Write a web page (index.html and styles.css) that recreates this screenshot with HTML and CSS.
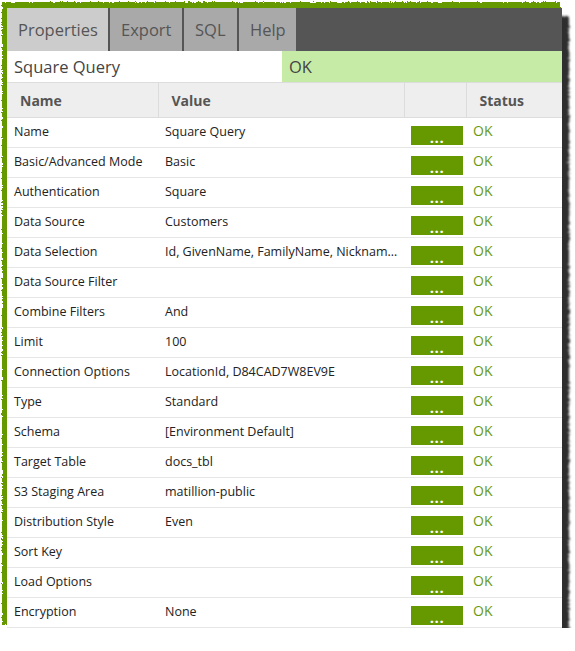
FILE: index.html
```html
<!DOCTYPE html>
<html>
<head>
<meta charset="utf-8">
<link rel="stylesheet" href="styles.css">
</head>
<body>
<svg class="defs" width="0" height="0" aria-hidden="true">
  <filter id="torn" x="-10%" y="-10%" width="120%" height="120%">
    <feTurbulence type="fractalNoise" baseFrequency="0.6" numOctaves="2" seed="3" result="n"/>
    <feDisplacementMap in="SourceGraphic" in2="n" scale="4" xChannelSelector="R" yChannelSelector="G"/>
  </filter>
  <filter id="tornshadow" x="-10%" y="-10%" width="120%" height="120%">
    <feTurbulence type="fractalNoise" baseFrequency="0.5" numOctaves="2" seed="7" result="n"/>
    <feDisplacementMap in="SourceGraphic" in2="n" scale="5" xChannelSelector="R" yChannelSelector="G" result="d"/>
    <feGaussianBlur in="d" stdDeviation="1.2"/>
  </filter>
</svg>
<div class="sheet">
  <div class="shadow"></div>
  <div class="edge"></div>
  <div class="panel">
    <div class="tabs">
      <div class="tab active">Properties</div>
      <div class="tab">Export</div>
      <div class="tab">SQL</div>
      <div class="tab">Help</div>
    </div>
    <div class="titlebar">
      <div class="title">Square Query</div>
      <div class="state">OK</div>
    </div>
    <table class="props">
      <colgroup>
        <col class="c-name"><col class="c-value"><col class="c-btn"><col class="c-status">
      </colgroup>
      <thead>
        <tr><th>Name</th><th>Value</th><th></th><th>Status</th></tr>
      </thead>
      <tbody>
        <tr><td>Name</td><td>Square Query</td><td><span class="btn">...</span></td><td class="ok">OK</td></tr>
        <tr><td>Basic/Advanced Mode</td><td>Basic</td><td><span class="btn">...</span></td><td class="ok">OK</td></tr>
        <tr><td>Authentication</td><td>Square</td><td><span class="btn">...</span></td><td class="ok">OK</td></tr>
        <tr><td>Data Source</td><td>Customers</td><td><span class="btn">...</span></td><td class="ok">OK</td></tr>
        <tr><td>Data Selection</td><td class="trunc">Id, GivenName, FamilyName, Nickname, CompanyName</td><td><span class="btn">...</span></td><td class="ok">OK</td></tr>
        <tr><td>Data Source Filter</td><td></td><td><span class="btn">...</span></td><td class="ok">OK</td></tr>
        <tr><td>Combine Filters</td><td>And</td><td><span class="btn">...</span></td><td class="ok">OK</td></tr>
        <tr><td>Limit</td><td>100</td><td><span class="btn">...</span></td><td class="ok">OK</td></tr>
        <tr><td>Connection Options</td><td>LocationId, D84CAD7W8EV9E</td><td><span class="btn">...</span></td><td class="ok">OK</td></tr>
        <tr><td>Type</td><td>Standard</td><td><span class="btn">...</span></td><td class="ok">OK</td></tr>
        <tr><td>Schema</td><td>[Environment Default]</td><td><span class="btn">...</span></td><td class="ok">OK</td></tr>
        <tr><td>Target Table</td><td>docs_tbl</td><td><span class="btn">...</span></td><td class="ok">OK</td></tr>
        <tr><td>S3 Staging Area</td><td>matillion-public</td><td><span class="btn">...</span></td><td class="ok">OK</td></tr>
        <tr><td>Distribution Style</td><td>Even</td><td><span class="btn">...</span></td><td class="ok">OK</td></tr>
        <tr><td>Sort Key</td><td></td><td><span class="btn">...</span></td><td class="ok">OK</td></tr>
        <tr><td>Load Options</td><td></td><td><span class="btn">...</span></td><td class="ok">OK</td></tr>
        <tr><td>Encryption</td><td>None</td><td><span class="btn">...</span></td><td class="ok">OK</td></tr>
      </tbody>
    </table>
  </div>
</div>
</body>
</html>
```
FILE: styles.css
```css
html, body {
  margin: 0;
  padding: 0;
  background: #ffffff;
}
body {
  font-family: "Open Sans", "Liberation Sans", sans-serif;
  color: #333;
}
.defs {
  position: absolute;
  width: 0;
  height: 0;
}
.sheet {
  position: relative;
  margin: 8px 0 0 7px;
  width: 555px;
}
.shadow {
  position: absolute;
  left: 6px;
  top: 8px;
  right: -7px;
  bottom: -12px;
  background: #2e2e2e;
  filter: url(#tornshadow);
  z-index: 0;
}
.edge {
  position: absolute;
  left: -5px;
  top: -6px;
  right: 2px;
  bottom: 3px;
  background: #669900;
  filter: url(#torn);
  z-index: 1;
}
.panel {
  position: relative;
  z-index: 2;
  background: #fff;
}
.tabs {
  display: flex;
  gap: 2px;
  height: 43px;
  background: #555555;
}
.tab {
  display: flex;
  align-items: center;
  padding: 0 11px;
  background: #a9a9a9;
  color: #555;
  font-size: 16.5px;
}
.tab.active {
  background: #cccccc;
  width: 79px;
}
.tab:nth-child(2) { width: 50px; }
.tab:nth-child(3) { width: 31px; }
.tab:nth-child(4) { width: 35px; }
.titlebar {
  display: flex;
  height: 31px;
  border-bottom: 1px solid #dcdcdc;
  font-size: 16.5px;
  color: #444;
}
.title {
  width: 268px;
  padding-left: 7px;
  display: flex;
  align-items: center;
}
.state {
  flex: 1;
  background: #c6eba6;
  padding-left: 7px;
  display: flex;
  align-items: center;
}
.props {
  width: 555px;
  border-collapse: collapse;
  table-layout: fixed;
}
.c-name { width: 151px; }
.c-value { width: 246px; }
.c-btn { width: 62px; }
.c-status { width: 96px; }
.props th {
  background: #eeeeee;
  height: 34px;
  text-align: left;
  font-size: 14px;
  font-weight: 700;
  color: #555;
  padding: 0 0 0 13px;
  border-left: 1px solid #dcdcdc;
  border-bottom: 1px solid #dcdcdc;
}
.props th:first-child {
  border-left: none;
}
.props td {
  height: 30px;
  padding: 0 0 2px 7px;
  font-size: 12.5px;
  color: #222;
  border-bottom: 1px solid #e6e6e6;
  white-space: nowrap;
  overflow: hidden;
  box-sizing: border-box;
}
.props td.trunc {
  text-overflow: ellipsis;
  padding-right: 4px;
}
.btn {
  display: flex;
  justify-content: center;
  align-items: flex-end;
  width: 52px;
  height: 19px;
  margin-top: 7px;
  background: #669900;
  color: #fff;
  font-size: 15px;
  font-weight: 700;
  line-height: 1;
  letter-spacing: 0.5px;
}
.props td.ok {
  color: #6a9a10;
  font-size: 14px;
  padding-bottom: 4px;
}
```
